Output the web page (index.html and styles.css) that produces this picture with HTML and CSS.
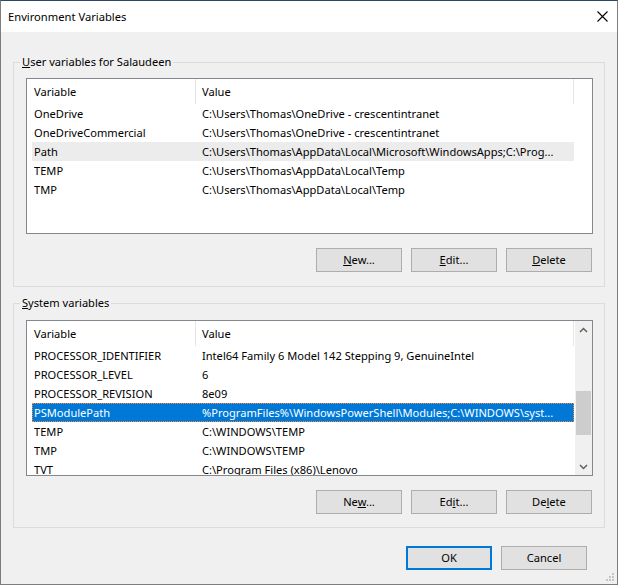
FILE: index.html
```html
<!DOCTYPE html>
<html>
<head>
<meta charset="utf-8">
<title>Environment Variables</title>
<link rel="stylesheet" href="styles.css">
</head>
<body>
<div class="window">
  <div class="titlebar">
    <span class="title">Environment Variables</span>
    <svg class="close" width="11" height="11" viewBox="0 0 11 11"><path d="M0.5 0.5 L10.5 10.5 M10.5 0.5 L0.5 10.5" stroke="#000" stroke-width="1.1" fill="none"/></svg>
  </div>
  <div class="content">
    <fieldset class="group group-user">
      <legend class="legend"><u>U</u>ser variables for Salaudeen</legend>
      <div class="list">
        <div class="list-main">
          <div class="header">
            <div class="hcell hname">Variable</div>
            <div class="hcell hvalue">Value</div>
          </div>
          <div class="row"><span class="name">OneDrive</span><span class="value">C:\Users\Thomas\OneDrive - crescentintranet</span></div>
          <div class="row"><span class="name">OneDriveCommercial</span><span class="value">C:\Users\Thomas\OneDrive - crescentintranet</span></div>
          <div class="row row-inactive"><span class="name">Path</span><span class="value">C:\Users\Thomas\AppData\Local\Microsoft\WindowsApps;C:\Prog...</span></div>
          <div class="row"><span class="name">TEMP</span><span class="value">C:\Users\Thomas\AppData\Local\Temp</span></div>
          <div class="row"><span class="name">TMP</span><span class="value">C:\Users\Thomas\AppData\Local\Temp</span></div>
        </div>
      </div>
      <div class="btnrow">
        <button class="btn"><u>N</u>ew...</button>
        <button class="btn"><u>E</u>dit...</button>
        <button class="btn"><u>D</u>elete</button>
      </div>
    </fieldset>

    <fieldset class="group group-system">
      <legend class="legend"><u>S</u>ystem variables</legend>
      <div class="list list-scroll">
        <div class="list-main">
          <div class="header">
            <div class="hcell hname">Variable</div>
            <div class="hcell hvalue">Value</div>
          </div>
          <div class="row"><span class="name">PROCESSOR_IDENTIFIER</span><span class="value">Intel64 Family 6 Model 142 Stepping 9, GenuineIntel</span></div>
          <div class="row"><span class="name">PROCESSOR_LEVEL</span><span class="value">6</span></div>
          <div class="row"><span class="name">PROCESSOR_REVISION</span><span class="value">8e09</span></div>
          <div class="row row-selected"><span class="name">PSModulePath</span><span class="value">%ProgramFiles%\WindowsPowerShell\Modules;C:\WINDOWS\syst...</span></div>
          <div class="row"><span class="name">TEMP</span><span class="value">C:\WINDOWS\TEMP</span></div>
          <div class="row"><span class="name">TMP</span><span class="value">C:\WINDOWS\TEMP</span></div>
          <div class="row"><span class="name">TVT</span><span class="value">C:\Program Files (x86)\Lenovo</span></div>
        </div>
        <div class="scrollbar">
          <div class="sb-btn">
            <svg width="9" height="6" viewBox="0 0 9 6"><path d="M1 5 L4.5 1.5 L8 5" stroke="#606060" stroke-width="1.5" fill="none"/></svg>
          </div>
          <div class="sb-track"><div class="sb-thumb"></div></div>
          <div class="sb-btn">
            <svg width="9" height="6" viewBox="0 0 9 6"><path d="M1 1 L4.5 4.5 L8 1" stroke="#606060" stroke-width="1.5" fill="none"/></svg>
          </div>
        </div>
      </div>
      <div class="btnrow">
        <button class="btn">Ne<u>w</u>...</button>
        <button class="btn">Ed<u>i</u>t...</button>
        <button class="btn">De<u>l</u>ete</button>
      </div>
    </fieldset>

    <div class="footer">
      <button class="btn btn-default">OK</button>
      <button class="btn">Cancel</button>
    </div>
  </div>
  <svg class="grip" width="9" height="9" viewBox="0 0 9 9">
    <rect x="6" y="0" width="2" height="2" fill="#c4c4c4"/>
    <rect x="3" y="3" width="2" height="2" fill="#c4c4c4"/>
    <rect x="6" y="3" width="2" height="2" fill="#c4c4c4"/>
    <rect x="0" y="6" width="2" height="2" fill="#c4c4c4"/>
    <rect x="3" y="6" width="2" height="2" fill="#c4c4c4"/>
    <rect x="6" y="6" width="2" height="2" fill="#c4c4c4"/>
  </svg>
</div>
</body>
</html>
```

FILE: styles.css
```css
* {
  box-sizing: border-box;
}

html, body {
  margin: 0;
  padding: 0;
}

body {
  width: 618px;
  height: 585px;
  overflow: hidden;
  font-family: "Noto Sans", "Open Sans", sans-serif;
  font-size: 11.1px;
  color: #000;
  background: #f0f0f0;
}

.window {
  position: relative;
  width: 618px;
  height: 585px;
  border: 1px solid #7d7d7d;
  border-top-color: #2c4a68;
  background: #f0f0f0;
  display: flex;
  flex-direction: column;
}

.titlebar {
  height: 31px;
  flex: none;
  background: #fff;
  display: flex;
  align-items: center;
  justify-content: space-between;
  padding: 0 9px 0 7px;
}

.title {
  font-size: 11.2px;
  line-height: 16px;
}

.close {
  display: block;
}

.content {
  flex: 1;
  padding: 22px 12px 0 12px;
  display: flex;
  flex-direction: column;
}

.group {
  margin: 0;
  padding: 0 0 14px 3px;
  border: 1px solid #dcdcdc;
  min-width: 0;
}

.group-system {
  margin-top: 8px;
  padding-bottom: 13px;
}

.legend {
  margin-left: 3px;
  padding: 0 2px;
  line-height: 16px;
  height: 16px;
}

.list {
  width: 567px;
  height: 156px;
  margin: 8px 0 0 9px;
  border: 1px solid #828790;
  background: #fff;
  overflow: hidden;
  display: flex;
}

.group-system .list {
  margin-top: 9px;
}

.list-main {
  flex: 1;
  min-width: 0;
  overflow: hidden;
}

.header {
  height: 25px;
  display: flex;
}

.hcell {
  line-height: 25px;
  white-space: nowrap;
}

.hname {
  width: 169px;
  padding-left: 7px;
  border-right: 1px solid #e5e5e5;
}

.hvalue {
  width: 378px;
  padding-left: 6px;
  border-right: 1px solid #e5e5e5;
}

.row {
  height: 19px;
  width: 542px;
  margin-left: 5px;
  padding-left: 2px;
  display: flex;
  align-items: center;
  white-space: nowrap;
  line-height: 19px;
}

.name {
  width: 168px;
  flex: none;
  overflow: hidden;
}

.value {
  flex: 1;
  min-width: 0;
  overflow: hidden;
}

.row-inactive {
  background: #ececec;
}

.row-selected {
  background: #0078d7;
  color: #fff;
  outline: 1px dotted #ff8728;
  outline-offset: -1px;
}

.scrollbar {
  width: 17px;
  flex: none;
  background: #f0f0f0;
  display: flex;
  flex-direction: column;
}

.sb-btn {
  height: 17px;
  flex: none;
  display: flex;
  align-items: center;
  justify-content: center;
}

.sb-btn svg {
  display: block;
}

.sb-track {
  flex: 1;
}

.sb-thumb {
  margin: 53px 1px 0 1px;
  height: 44px;
  background: #cdcdcd;
}

.btnrow {
  display: flex;
  justify-content: flex-end;
  gap: 9px;
  margin-top: 14px;
  padding-right: 12px;
}

.btn {
  width: 86px;
  height: 24px;
  padding: 0;
  margin: 0;
  background: #e1e1e1;
  border: 1px solid #adadad;
  font-family: inherit;
  font-size: 11.1px;
  color: #000;
  line-height: 20px;
}

.btn-default {
  border: 2px solid #0078d7;
}

.footer {
  display: flex;
  justify-content: flex-end;
  gap: 9px;
  margin-top: 18px;
  padding-right: 18px;
}

.grip {
  position: absolute;
  right: 2px;
  bottom: 2px;
  display: block;
}
```
